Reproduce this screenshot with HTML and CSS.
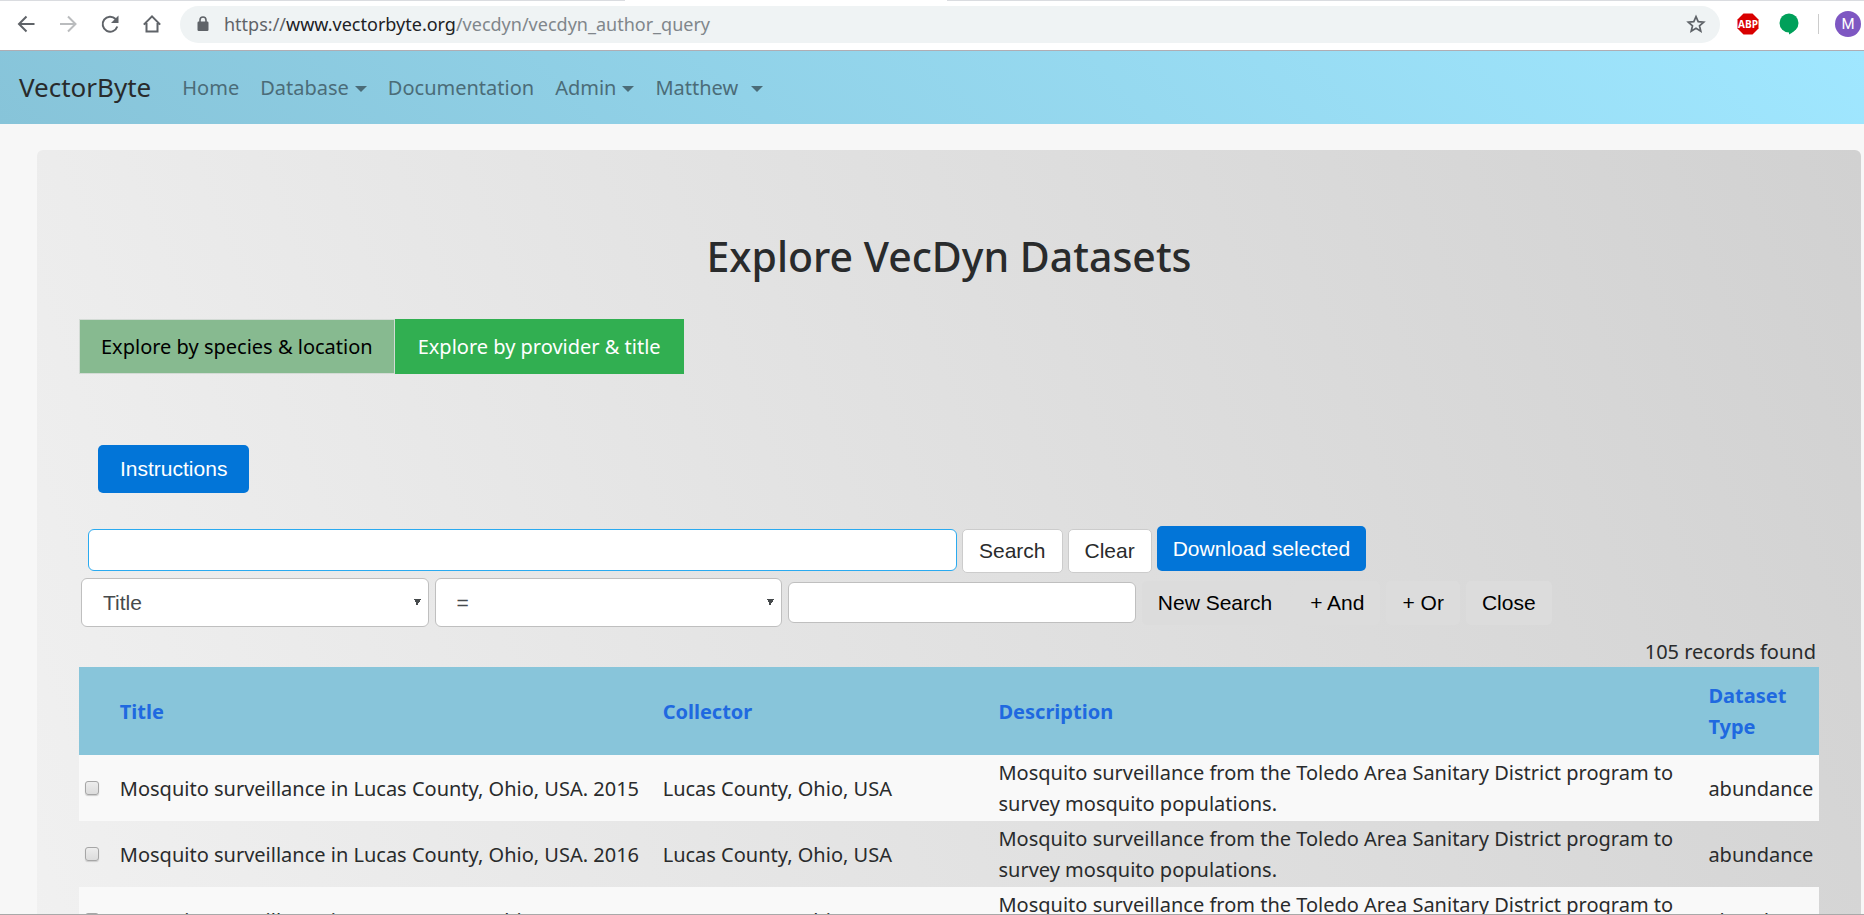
FILE: index.html
```html
<!DOCTYPE html>
<html lang="en">
<head>
<meta charset="utf-8">
<title>VectorByte - Explore VecDyn Datasets</title>
<link rel="stylesheet" href="styles.css">
</head>
<body>
<div class="toolbar">
  <button class="tool" aria-label="Back"><svg viewBox="0 0 20 20" width="20" height="20"><path d="M18.500 10H3M10.500 2.500 3 10l7.500 7.500" /></svg></button>
  <button class="tool tool-off" aria-label="Forward"><svg viewBox="0 0 20 20" width="20" height="20"><path d="M2 10h15.500M10 2.500l7.500 7.500-7.500 7.500" /></svg></button>
  <button class="tool" aria-label="Reload"><svg viewBox="0 0 20 20" width="20" height="20"><path d="M17.300 12.500A7.500 7.500 0 1 1 15.600 5" /><path class="solid" d="M18.500 1.500V9H11z" /></svg></button>
  <button class="tool" aria-label="Home"><svg viewBox="0 0 20 20" width="20" height="20"><path d="M1.800 10.600 10 2.400l8.200 8.200M4.500 9v8.500h11V9" /></svg></button>
  <div class="omnibox">
    <svg class="lock" viewBox="0 0 12 16" width="12" height="16"><rect x="0.500" y="5.500" width="11" height="9.500" rx="1.200" fill="#5f6368"/><path d="M3 6V4a3 3 0 0 1 6 0v2" fill="none" stroke="#5f6368" stroke-width="1.600"/></svg>
    <div class="url">https://<span class="host">www.vectorbyte.org</span><span class="path">/vecdyn/vecdyn_author_query</span></div>
    <button class="star" aria-label="Bookmark"><svg viewBox="0 0 20 20" width="20" height="20"><path d="M10 2.600l2.200 5.100 5.500.500-4.200 3.600 1.300 5.400-4.800-2.900-4.800 2.900 1.300-5.400L2.300 8.200l5.500-.500z" fill="none" stroke="#5f6368" stroke-width="1.700"/></svg></button>
  </div>
  <svg class="abp" viewBox="0 0 22 22" width="22" height="22" aria-label="ABP"><path d="M6.500.500h9l6 6v9l-6 6h-9l-6-6v-9z" fill="#d90000"/><text x="11" y="14.500" text-anchor="middle" class="abp-text">ABP</text></svg>
  <svg class="bubble" viewBox="0 0 20 22" width="20" height="22"><circle cx="10" cy="10" r="9.500" fill="#00a05a"/><path d="M10 18v3.500c3-1.500 6-4 7.500-6.500z" fill="#00a05a"/></svg>
  <div class="rule"></div>
  <button class="avatar">M</button>
</div>

<nav class="navbar">
  <a class="brand" href="#">VectorByte</a>
  <a class="nav-link" href="#">Home</a>
  <a class="nav-link caret" href="#">Database</a>
  <a class="nav-link" href="#">Documentation</a>
  <a class="nav-link caret" href="#">Admin</a>
  <a class="nav-link caret caret-far" href="#">Matthew</a>
</nav>

<main class="panel">
  <h1 class="heading">Explore VecDyn Datasets</h1>
  <div class="tabs">
    <a class="tab" href="#">Explore by species &amp; location</a>
    <a class="tab tab-active" href="#">Explore by provider &amp; title</a>
  </div>
  <button class="btn btn-primary instructions">Instructions</button>
  <form class="search">
    <div class="line line-query">
      <input class="field query" type="text" aria-label="Search query">
      <button class="btn btn-white" type="button">Search</button>
      <button class="btn btn-white" type="button">Clear</button>
      <button class="btn btn-primary download" type="button">Download selected</button>
    </div>
    <div class="line line-filter">
      <select class="field choice" aria-label="Field"><option>Title</option></select>
      <select class="field choice" aria-label="Operator"><option>=</option></select>
      <input class="field value" type="text" aria-label="Value">
      <button class="btn btn-plain" type="button">New Search</button>
      <button class="btn btn-plain" type="button">+ And</button>
      <button class="btn btn-plain" type="button">+ Or</button>
      <button class="btn btn-plain" type="button">Close</button>
    </div>
  </form>
  <div class="count">105 records found</div>
  <table class="grid">
    <colgroup><col class="c-check"><col class="c-title"><col class="c-collector"><col class="c-desc"><col class="c-type"></colgroup>
    <thead>
      <tr><th></th><th><a href="#">Title</a></th><th><a href="#">Collector</a></th><th><a href="#">Description</a></th><th><a href="#">Dataset Type</a></th></tr>
    </thead>
    <tbody>
      <tr><td><input class="tick" type="checkbox" aria-label="Select 2015"></td><td>Mosquito surveillance in Lucas County, Ohio, USA. 2015</td><td>Lucas County, Ohio, USA</td><td>Mosquito surveillance from the Toledo Area Sanitary District program to survey mosquito populations.</td><td>abundance</td></tr>
      <tr><td><input class="tick" type="checkbox" aria-label="Select 2016"></td><td>Mosquito surveillance in Lucas County, Ohio, USA. 2016</td><td>Lucas County, Ohio, USA</td><td>Mosquito surveillance from the Toledo Area Sanitary District program to survey mosquito populations.</td><td>abundance</td></tr>
      <tr><td><input class="tick" type="checkbox" aria-label="Select 2017"></td><td>Mosquito surveillance in Lucas County, Ohio, USA. 2017</td><td>Lucas County, Ohio, USA</td><td>Mosquito surveillance from the Toledo Area Sanitary District program to survey mosquito populations.</td><td>abundance</td></tr>
    </tbody>
  </table>
</main>
</body>
</html>
```
FILE: styles.css
```css
* { box-sizing: border-box; }
body {
  margin: 0;
  height: 100vh;
  overflow: hidden;
  display: flex;
  flex-direction: column;
  background: #f7f7f7;
  border-bottom: 1px solid #a9a9a9;
  color: #292b2c;
  font: 20px/31px "Noto Sans", sans-serif;
}
a { text-decoration: none; color: inherit; }
button { font: inherit; border: 0; padding: 0; background: none; }

.toolbar {
  flex: none;
  display: flex;
  align-items: center;
  height: 51px;
  padding: 0 3px 2px 16px;
  background: linear-gradient(90deg, #dadce0 625px, #fff 625px 947px, #dadce0 947px) top / 100% 1px no-repeat #fff;
  border-bottom: 1px solid #b0adb3;
}
.toolbar > * { flex-shrink: 0; }
.tool { display: flex; width: 20px; margin-right: 22px; }
.tool path { fill: none; stroke: #5f6368; stroke-width: 2; }
.tool .solid { fill: #5f6368; stroke: none; }
.tool-off path { stroke: #babcbe; }
.omnibox {
  flex: 1;
  display: flex;
  align-items: center;
  height: 37px;
  margin: 0 17px 0 -4px;
  padding: 0 14px 0 17px;
  border-radius: 19px;
  background: #eff3f4;
}
.lock { margin-right: 15px; }
.url { flex: 1; font-size: 18px; color: #5f6368; }
.host { color: #202124; }
.path { color: #80868b; }
.star { display: flex; }
.abp { margin-right: 20px; }
.abp-text { font: bold 10px "Open Sans", sans-serif; fill: #fff; }
.bubble { margin-right: 19px; }
.rule { width: 1px; height: 20px; background: #ccc; margin-right: 16px; }
.avatar {
  width: 26px;
  height: 26px;
  border-radius: 50%;
  background: #7e57c2;
  color: #fff;
  font: 15px/26px Roboto, sans-serif;
}

.navbar {
  flex: none;
  display: flex;
  align-items: center;
  height: 73px;
  padding: 0 19px;
  background: linear-gradient(45deg, #87c4d9, #a0e7ff);
}
.brand { font-size: 26px; margin-right: 31px; }
.nav-link { color: #4b6c78; margin-right: 21px; }
.caret::after {
  content: "";
  display: inline-block;
  margin-left: 6px;
  vertical-align: 3px;
  border: 6px solid transparent;
  border-top-color: currentColor;
  border-bottom: 0;
}
.caret-far::after { margin-left: 13px; }

.panel {
  flex: none;
  margin: 26px 3px 0 37px;
  padding: 81px 42px;
  border-radius: 6px;
  background: linear-gradient(70deg, #f1f1f1, #d1d1d1);
}
.heading { margin: 0; font-size: 41px; line-height: 50px; font-weight: 500; text-align: center; }
.tabs { display: flex; margin-top: 38px; }
.tab {
  padding: 11px 21px;
  border: 1px solid #d3dbd5;
  background: #87ba90;
  color: #000;
}
.tab-active { padding: 11px 22px; background: #31af51; border-color: #31af51; color: #fff; }

.btn {
  padding: 0 16px;
  height: 44px;
  border-radius: 5px;
  font: 21px/42px "Liberation Sans", sans-serif;
  white-space: nowrap;
}
.btn-primary { background: #0275d8; color: #fff; }
.btn-white { background: #fff; border: 1px solid #ccc; color: #292b2c; }
.btn-plain { background: #dcdcdc; color: #000; }
.instructions { display: block; height: 48px; padding: 0 22px; margin: 71px 19px 33px; }
.line { display: flex; }
.line-query { align-items: flex-end; gap: 5px; min-height: 47px; padding-left: 9px; }
.line-filter { align-items: center; gap: 6px; padding-left: 2px; margin-top: 5px; }
.download { align-self: flex-start; height: 45px; }
.field {
  border: 1px solid #bfbfbf;
  border-radius: 6px;
  background: #fff;
  color: #464a4c;
  font: 21px "Liberation Sans", sans-serif;
}
.query { align-self: center; width: 50.2%; height: 42px; border-color: #2aaaf0; }
.value { width: 20%; height: 41px; }
.choice {
  width: 20%;
  height: 49px;
  padding: 0 21px;
  appearance: none;
  background:
    linear-gradient(to bottom right, #464a4c 50%, transparent 50%) right 7px center / 4px 7px no-repeat,
    linear-gradient(to bottom left, #464a4c 50%, transparent 50%) right 11px center / 3px 7px no-repeat,
    #fff;
}
.count { margin-top: 9px; padding-right: 3px; text-align: right; }

.grid { width: 100%; table-layout: fixed; border-collapse: collapse; }
.c-check { width: 2%; }
.c-title { width: 31.2%; }
.c-collector { width: 19.3%; }
.c-desc { width: 40.8%; }
.c-type { width: 6.7%; }
.grid th { height: 88px; padding: 2px 6px; background: #88c5da; color: #1f69e0; text-align: left; }
.grid td { height: 66px; padding: 2px 6px; }
.grid tbody tr:nth-child(odd) { background: #f9f9f9; }
.tick {
  display: block;
  appearance: none;
  width: 14px;
  height: 14px;
  margin: 0;
  border: 1px solid #a6a6a6;
  border-radius: 3px;
  background: linear-gradient(#ededed, #dcdcdc);
  box-shadow: 0 1px 1px #ccc;
}
```
